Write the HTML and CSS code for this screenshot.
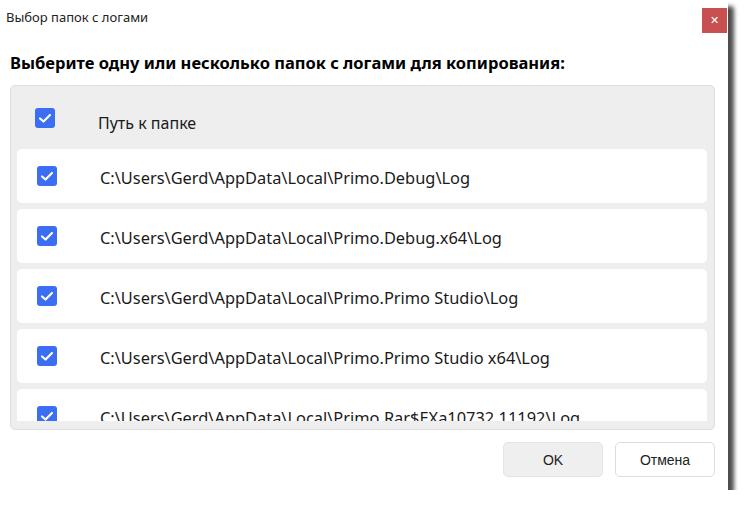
FILE: index.html
```html
<!DOCTYPE html>
<html lang="ru">
<head>
    <meta charset="UTF-8">
    <title>Выбор папок с логами</title>
    <link rel="stylesheet" href="styles.css">
</head>
<body>
    <div class="window">
        <div class="titlebar">
            <span class="title">Выбор папок с логами</span>
            <button class="close">&#x2715;</button>
        </div>
        <h2 class="heading">Выберите одну или несколько папок с логами для копирования:</h2>

        <div class="panel">
            <div class="head-row">
                <span class="check"><svg viewBox="0 0 20 20"><path d="M5 10.5 L8.5 13.5 L15 7" /></svg></span>
                <span class="head-label">Путь к папке</span>
            </div>
            <div class="list">
                <!-- строки со списком папок -->
                <div class="row">
                    <span class="check"><svg viewBox="0 0 20 20"><path d="M5 10.5 L8.5 13.5 L15 7" /></svg></span>
                    <span class="path">C:\Users\Gerd\AppData\Local\Primo.Debug\Log</span>
                </div>
                <div class="row">
                    <span class="check"><svg viewBox="0 0 20 20"><path d="M5 10.5 L8.5 13.5 L15 7" /></svg></span>
                    <span class="path">C:\Users\Gerd\AppData\Local\Primo.Debug.x64\Log</span>
                </div>
                <div class="row">
                    <span class="check"><svg viewBox="0 0 20 20"><path d="M5 10.5 L8.5 13.5 L15 7" /></svg></span>
                    <span class="path">C:\Users\Gerd\AppData\Local\Primo.Primo Studio\Log</span>
                </div>
                <div class="row">
                    <span class="check"><svg viewBox="0 0 20 20"><path d="M5 10.5 L8.5 13.5 L15 7" /></svg></span>
                    <span class="path">C:\Users\Gerd\AppData\Local\Primo.Primo Studio x64\Log</span>
                </div>
                <div class="row">
                    <span class="check"><svg viewBox="0 0 20 20"><path d="M5 10.5 L8.5 13.5 L15 7" /></svg></span>
                    <span class="path">C:\Users\Gerd\AppData\Local\Primo.Rar$EXa10732.11192\Log</span>
                </div>
            </div>
        </div>

        <div class="footer">
            <button class="btn btn-ok">OK</button>
            <button class="btn">Отмена</button>
        </div>
    </div>
</body>
</html>
```

FILE: styles.css
```css
body {
    margin: 0;
    background: #ffffff;
    font-family: "Noto Sans", "Open Sans", sans-serif;
    color: #1a1a1a;
}
.window {
    width: 728px;
    height: 490px;
    background: #ffffff;
    border-top-right-radius: 4px;
    box-shadow: 6px 6px 4px rgba(0, 0, 0, 0.7);
    display: flex;
    flex-direction: column;
    box-sizing: border-box;
}
.titlebar {
    height: 44px;
    display: flex;
    justify-content: space-between;
    align-items: flex-start;
}
.title {
    font-size: 13px;
    padding: 8px 0 0 6px;
    color: #222;
}
.close {
    width: 25px;
    height: 25px;
    margin: 8px 1px 0 0;
    border: none;
    padding: 0;
    background: #c85050;
    color: #fff;
    font-size: 11px;
    font-weight: bold;
    font-family: "DejaVu Sans", sans-serif;
}
.heading {
    margin: 0 0 3px 10px;
    font-size: 16.5px;
    line-height: 38px;
    height: 38px;
    font-weight: bold;
    color: #000;
}
.panel {
    margin: 0 13px 0 10px;
    height: 345px;
    box-sizing: border-box;
    background: #eeeeee;
    border: 1px solid #dedede;
    border-radius: 5px;
    padding-bottom: 8px;
    display: flex;
    flex-direction: column;
}
.head-row {
    height: 63px;
    flex-shrink: 0;
    display: flex;
    align-items: center;
    padding-left: 24px;
}
.head-label {
    margin-left: 43px;
    font-size: 16px;
    padding-top: 10px;
}
.list {
    flex: 1;
    overflow: hidden;
    padding: 0 7px 0 6px;
}
.row {
    height: 54px;
    margin-bottom: 6px;
    background: #ffffff;
    border-radius: 5px;
    display: flex;
    align-items: center;
    padding-left: 20px;
}
.path {
    margin-left: 43px;
    font-size: 16.4px;
    padding-top: 3px;
}
.check {
    width: 20px;
    height: 20px;
    flex-shrink: 0;
    background: #3b6ef3;
    border-radius: 3px;
    display: flex;
}
.check svg {
    width: 20px;
    height: 20px;
}
.check path {
    fill: none;
    stroke: #ffffff;
    stroke-width: 2.2;
    stroke-linecap: round;
    stroke-linejoin: round;
}
.footer {
    display: flex;
    justify-content: flex-end;
    gap: 12px;
    padding: 12px 13px 0 0;
}
.btn {
    width: 100px;
    height: 35px;
    border: 1px solid #dddddd;
    border-radius: 5px;
    background: #ffffff;
    font-family: "Liberation Sans", sans-serif;
    font-size: 14px;
    color: #222;
}
.btn-ok {
    background: #efefef;
    border-color: #e4e4e4;
}
```
